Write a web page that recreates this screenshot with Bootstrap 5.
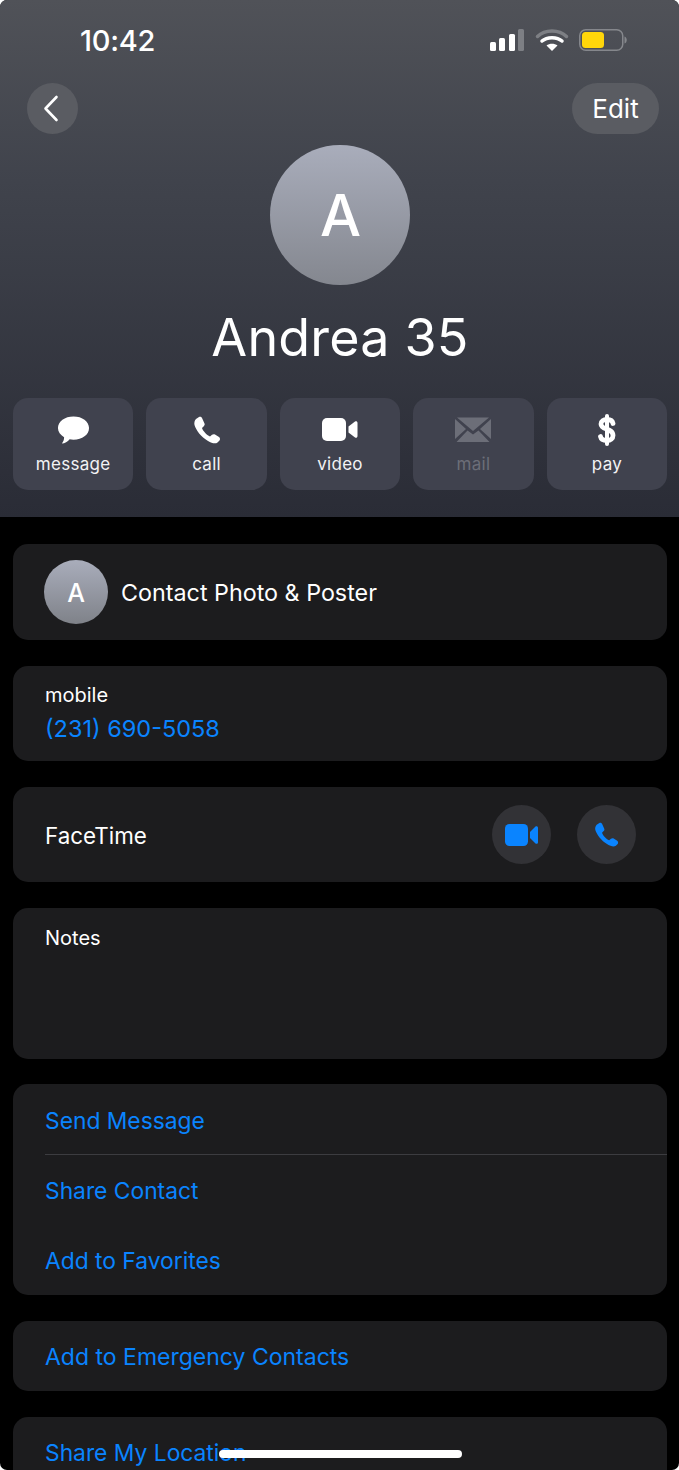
<!DOCTYPE html>
<html lang="en">
<head>
  <meta charset="UTF-8" />
  <meta name="viewport" content="width=device-width, initial-scale=1.0"/>
  <title>Andrea 35</title>
  <link href="https://cdn.jsdelivr.net/npm/bootstrap@5.3.0/dist/css/bootstrap.min.css" rel="stylesheet"/>
  <style>
    html { height: 1470px; overflow: hidden; background: #fff; }
    body { height: 1470px; overflow: hidden; border-radius: 7px; background: #000; color: #fff; font-family: Inter, "Liberation Sans", sans-serif; }

    /* Top part with the gradient */
    .contact-head { height: 517px; background: linear-gradient(180deg, #505258 0%, #40434c 35%, #2a2c36 100%); padding: 0 12px 0 13px; }
    .status-row { height: 83px; padding: 0 37px 1px 67px; }
    .status-time { font-size: 29px; font-weight: 500; line-height: 36px; letter-spacing: -.3px; }
    .nav-row { height: 51px; padding-left: 14px; padding-right: 8px; }
    .round-back { width: 51px; height: 51px; background: #5a5c62; border-radius: 50%; padding-right: 4px; }
    .edit-pill { width: 87px; height: 51px; background: #5a5c62; border-radius: 26px; font-size: 26px; line-height: 51px; text-align: center; }
    .avatar-big { width: 140px; height: 140px; border-radius: 50%; margin-top: 11px; background: linear-gradient(180deg, #a9adbb, #84878f); font-size: 58px; font-weight: 500; padding-left: 1px; }
    .contact-name { font-size: 52px; line-height: 64px; margin-top: 21px; margin-bottom: 28px; font-weight: 400; letter-spacing: .2px; }
    .action-row { gap: 13.25px; }
    .action-tile { width: 121px; height: 92px; background: #40424e; border-radius: 15px; font-size: 17px; line-height: 20px; letter-spacing: .3px; padding-top: 18px; color: #f2f2f4; }
    .action-tile .ico { height: 28px; margin-bottom: 10px; }
    .action-tile.off { color: #6c6e78; }

    /* Lists */
    .info-list { padding: 27px 12px 0 13px; }
    .info-box { background: #1c1c1e; border-radius: 15px; margin-bottom: 26px; padding: 0 32px; font-size: 23px; }
    .box-poster { height: 96px; padding-left: 31px; }
    .box-poster span { padding-top: 3px; font-size: 23.300px; }
    .avatar-small { width: 64px; height: 64px; border-radius: 50%; margin-right: 13px; padding-top: 3px; background: linear-gradient(180deg, #a9adbb, #7f8289); font-size: 25px; font-weight: 500; }
    .box-phone { height: 95px; padding-top: 17px; }
    .box-phone .lbl, .box-notes .lbl { font-size: 20px; line-height: 25px; }
    .blue-link { color: #0a84ff; text-decoration: none; }
    .box-phone .blue-link { display: block; line-height: 35px; margin-top: 3px; font-size: 23.500px; }
    .box-facetime { height: 95px; padding-right: 31px; }
    .box-facetime .me-auto { padding-top: 3px; font-size: 22.400px; }
    .ft-btn { width: 59px; height: 59px; border-radius: 50%; background: #323236; margin-left: 26px; }
    .box-notes { height: 151px; padding-top: 18px; margin-bottom: 25px; }
    .box-actions { height: 211px; padding-right: 0; padding-top: 1px; }
    .act-line { height: 70px; line-height: 72px; font-size: 22.800px; }
    .act-line.sep { border-bottom: 1px solid #3c3c40; }
    .box-single { height: 70px; line-height: 72px; }
    .box-last { height: 70px; line-height: 72px; margin-bottom: 0; font-size: 22.800px; }

    .home-bar { position: absolute; left: 219px; top: 1450px; width: 243px; height: 8px; background: #fff; border-radius: 4px; }
  </style>
</head>
<body>
  <div class="contact-head">
    <div class="status-row d-flex justify-content-between align-items-center">
      <span class="status-time">10:42</span>
      <svg width="140" height="28" viewBox="0 0 140 28">
        <g fill="#fff">
          <rect x="0" y="15" width="6" height="9" rx="1.500"/>
          <rect x="9" y="11" width="6" height="13" rx="1.500"/>
          <rect x="19" y="7" width="6" height="17" rx="1.500"/>
        </g>
        <rect x="28" y="2" width="6" height="22" rx="1.500" fill="#7d7f84"/>
        <path d="M47.500 9.500 C55 2 69 2 76.500 9.500" fill="none" stroke="#7d7f84" stroke-width="3.500" stroke-linecap="round"/>
        <path d="M52 14 C57 9.500 67 9.500 72 14" fill="none" stroke="#fff" stroke-width="3.500" stroke-linecap="round"/>
        <path d="M56.500 18.500 C59.500 16 64.500 16 67.500 18.500 L62 24 Z" fill="#fff"/>
        <rect x="89.750" y="2.750" width="43" height="20.500" rx="6" fill="none" stroke="#85878c" stroke-width="1.500"/>
        <rect x="92" y="5" width="22" height="16" rx="3.500" fill="#ffd60a"/>
        <path d="M134.500 9.500 C137.500 10.500 137.500 15.500 134.500 16.500 Z" fill="#85878c"/>
      </svg>
    </div>
    <div class="nav-row d-flex justify-content-between">
      <div class="round-back d-flex align-items-center justify-content-center">
        <svg width="16" height="27" viewBox="0 0 16 27"><path d="M13.500 2 L2.500 13.500 L13.500 25" fill="none" stroke="#fff" stroke-width="2.600" stroke-linecap="round" stroke-linejoin="round"/></svg>
      </div>
      <div class="edit-pill">Edit</div>
    </div>
    <div class="d-flex justify-content-center">
      <div class="avatar-big d-flex align-items-center justify-content-center">A</div>
    </div>
    <h1 class="contact-name text-center">Andrea 35</h1>
    <div class="action-row d-flex">
      <div class="action-tile text-center">
        <div class="ico d-flex align-items-center justify-content-center"><svg width="33" height="30" viewBox="0 0 34 30"><path d="M17 1 C26 1 33 6 33 13 C33 20 26 25 17 25 C15.500 25 14 24.800 13 24.500 C11 27 8 29 5 29 C6.500 27 7.500 24.500 7.300 22.500 C3.500 20 1 17 1 13 C1 6 8 1 17 1 Z" fill="#fff"/></svg></div>
        message
      </div>
      <div class="action-tile text-center">
        <div class="ico d-flex align-items-center justify-content-center"><svg width="28" height="28" viewBox="0 0 28 28"><path d="M3 3 L6 1 C7 .400 8.500 .800 9 2 L11.500 7.500 C12 8.500 11.500 9.500 10.800 10.200 L9 12 C10 15 13.500 19 17 20.500 L19 18.800 C20 18 21 18 22 18.400 L26 21 C27.200 22 27.300 23.500 26.500 24.500 L24.500 26.500 C22.500 28 19 27.500 15 25 C8 21 3 14 1.500 9 C1 7 1.500 4.500 3 3 Z" fill="#fff"/></svg></div>
        call
      </div>
      <div class="action-tile text-center">
        <div class="ico d-flex align-items-center justify-content-center"><svg width="36" height="26" viewBox="0 0 36 26"><rect x="0" y="1" width="24" height="23" rx="5" fill="#fff"/><path d="M26.500 9.500 L33 4.500 C34.200 3.800 35.500 4.500 35.500 6 V19 C35.500 20.500 34.200 21.200 33 20.500 L26.500 15.500 Z" fill="#fff"/></svg></div>
        video
      </div>
      <div class="action-tile off text-center">
        <div class="ico d-flex align-items-center justify-content-center"><svg width="36" height="26" viewBox="0 0 36 26"><path d="M2 .500 H34 L18 14 Z M0 2 L11 12 L0 22 Z M36 2 L25 12 L36 22 Z M1.500 25 L12.500 13.500 L18 17.500 L23.500 13.500 L34.500 25 Z" fill="#6c6e78"/></svg></div>
        mail
      </div>
      <div class="action-tile text-center">
        <div class="ico d-flex align-items-center justify-content-center"><svg width="18" height="34" viewBox="0 0 18 34"><path d="M15 10.500 C14.500 7.500 12.500 6.500 9 6.500 C5.500 6.500 3 8 3 11 C3 17.500 15 14.500 15 22.500 C15 25.500 12.500 27.500 9 27.500 C5.500 27.500 3 26 2.500 23.500" fill="none" stroke="#fff" stroke-width="4.800" stroke-linecap="round"/><rect x="7" y="1" width="4" height="32" rx="2" fill="#fff"/></svg></div>
        pay
      </div>
    </div>
  </div>

  <div class="info-list">
    <div class="info-box box-poster d-flex align-items-center">
      <div class="avatar-small d-flex align-items-center justify-content-center">A</div>
      <span>Contact Photo &amp; Poster</span>
    </div>
    <div class="info-box box-phone">
      <div class="lbl">mobile</div>
      <a class="blue-link" href="#">(231) 690-5058</a>
    </div>
    <div class="info-box box-facetime d-flex align-items-center">
      <span class="me-auto">FaceTime</span>
      <div class="ft-btn d-flex align-items-center justify-content-center">
        <svg width="33" height="22" viewBox="0 0 33 22"><rect x="0" y="0" width="23" height="22" rx="4.500" fill="#0a84ff"/><path d="M25 8 L30.500 2.500 C31.500 1.700 33 2.300 33 3.700 V18.300 C33 19.700 31.500 20.300 30.500 19.500 L25 14 Z" fill="#0a84ff"/></svg>
      </div>
      <div class="ft-btn d-flex align-items-center justify-content-center">
        <svg width="25" height="25" viewBox="0 0 28 28"><path d="M3 3 L6 1 C7 .400 8.500 .800 9 2 L11.500 7.500 C12 8.500 11.500 9.500 10.800 10.200 L9 12 C10 15 13.500 19 17 20.500 L19 18.800 C20 18 21 18 22 18.400 L26 21 C27.200 22 27.300 23.500 26.500 24.500 L24.500 26.500 C22.500 28 19 27.500 15 25 C8 21 3 14 1.500 9 C1 7 1.500 4.500 3 3 Z" fill="#0a84ff"/></svg>
      </div>
    </div>
    <div class="info-box box-notes">
      <div class="lbl">Notes</div>
    </div>
    <div class="info-box box-actions">
      <div class="act-line sep"><a class="blue-link" href="#">Send Message</a></div>
      <div class="act-line"><a class="blue-link" href="#">Share Contact</a></div>
      <div class="act-line"><a class="blue-link" href="#">Add to Favorites</a></div>
    </div>
    <div class="info-box box-single"><a class="blue-link" href="#">Add to Emergency Contacts</a></div>
    <div class="info-box box-last"><a class="blue-link" href="#">Share My Location</a></div>
  </div>
  <div class="home-bar"></div>

  <script src="https://cdn.jsdelivr.net/npm/bootstrap@5.3.0/dist/js/bootstrap.bundle.min.js"></script>
</body>
</html>
